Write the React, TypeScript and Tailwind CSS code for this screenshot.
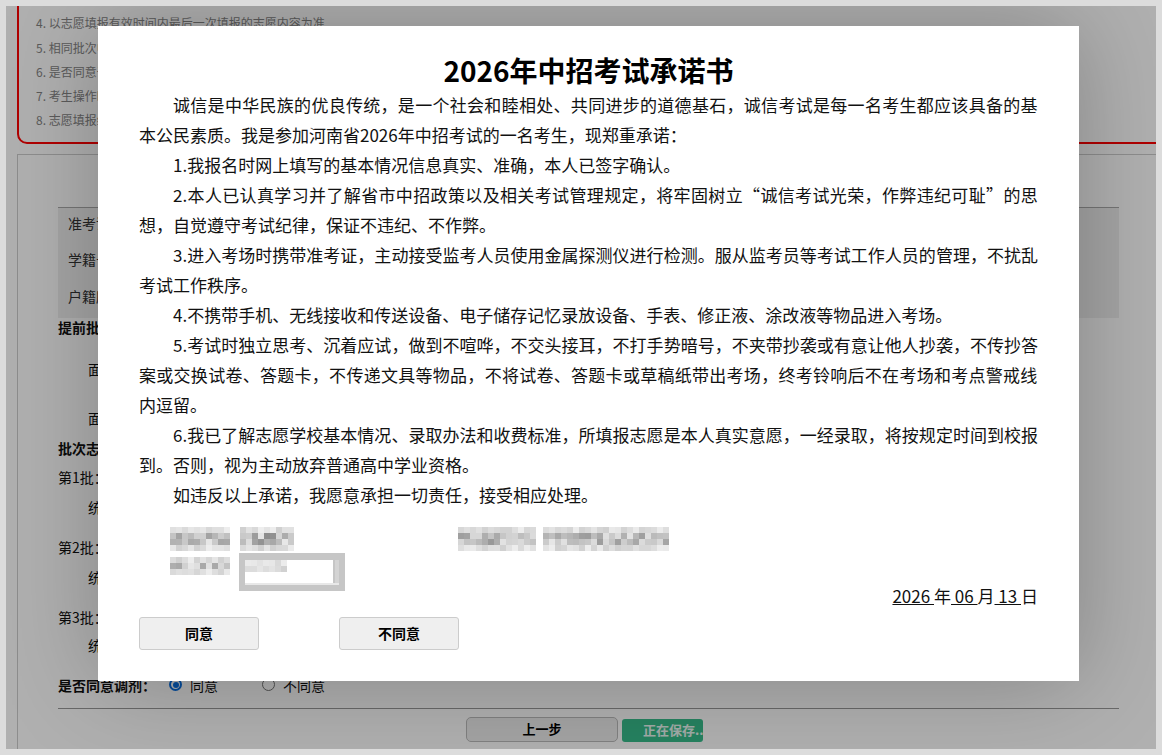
import React from "react";

type Line = { text: string; indent?: boolean; justify?: boolean };

const LINES: Line[] = [
  { text: "诚信是中华民族的优良传统，是一个社会和睦相处、共同进步的道德基石，诚信考试是每一名考生都应该具备的基", indent: true, justify: true },
  { text: "本公民素质。我是参加河南省2026年中招考试的一名考生，现郑重承诺：" },
  { text: "1.我报名时网上填写的基本情况信息真实、准确，本人已签字确认。", indent: true },
  { text: "2.本人已认真学习并了解省市中招政策以及相关考试管理规定，将牢固树立“诚信考试光荣，作弊违纪可耻”的思", indent: true, justify: true },
  { text: "想，自觉遵守考试纪律，保证不违纪、不作弊。" },
  { text: "3.进入考场时携带准考证，主动接受监考人员使用金属探测仪进行检测。服从监考员等考试工作人员的管理，不扰乱", indent: true, justify: true },
  { text: "考试工作秩序。" },
  { text: "4.不携带手机、无线接收和传送设备、电子储存记忆录放设备、手表、修正液、涂改液等物品进入考场。", indent: true },
  { text: "5.考试时独立思考、沉着应试，做到不喧哗，不交头接耳，不打手势暗号，不夹带抄袭或有意让他人抄袭，不传抄答", indent: true, justify: true },
  { text: "案或交换试卷、答题卡，不传递文具等物品，不将试卷、答题卡或草稿纸带出考场，终考铃响后不在考场和考点警戒线", justify: true },
  { text: "内逗留。" },
  { text: "6.我已了解志愿学校基本情况、录取办法和收费标准，所填报志愿是本人真实意愿，一经录取，将按规定时间到校报", indent: true, justify: true },
  { text: "到。否则，视为主动放弃普通高中学业资格。" },
  { text: "如违反以上承诺，我愿意承担一切责任，接受相应处理。", indent: true },
];

function tokens(s: string): string[] {
  return s.match(/[A-Za-z0-9.]+|./gu) || [];
}

function TextLine({ line }: { line: Line }) {
  if (line.justify) {
    return (
      <div className={line.indent ? "flex justify-between pl-[34px]" : "flex justify-between"}>
        {tokens(line.text).map((t, i) => (
          <span key={i}>{t}</span>
        ))}
      </div>
    );
  }
  return <div className={line.indent ? "pl-[34px]" : ""}>{line.text}</div>;
}

function rnd(x: number, y: number, seed: number) {
  const v = Math.sin(x * 12.9898 + y * 78.233 + seed * 3.7) * 43758.5453;
  return v - Math.floor(v);
}

function mosaic(x0: number, y0: number, w: number, h: number, seed: number, depth: number) {
  const out: React.ReactElement[] = [];
  const rows = Math.ceil(h / 6);
  for (let j = 0; j < rows; j++) {
    const y = y0 + j * 6;
    for (let x = x0; x < x0 + w; x += 6) {
      const r = rnd(x, y, seed);
      const edge = j === 0 || j === rows - 1;
      const g = Math.round(edge ? 238 - r * 30 : 232 - r * depth);
      out.push(
        <rect key={`${seed}-${x}-${y}`} x={x} y={y} width={6} height={6} fill={`rgb(${g},${g},${g})`} />
      );
    }
  }
  return out;
}

function Signature() {
  return (
    <svg width="540" height="64" viewBox="0 0 540 64">
      {mosaic(31, 0, 60, 20, 1, 70)}
      {mosaic(101, 0, 54, 20, 2, 95)}
      {mosaic(319, 0, 78, 20, 3, 80)}
      {mosaic(404, 0, 126, 20, 4, 75)}
      {mosaic(31, 30, 60, 18, 5, 90)}
      <rect x="100" y="26" width="106" height="38" fill="#c6c6c6" />
      <rect x="106" y="33" width="88" height="23" fill="#ffffff" />
      <rect x="196" y="33" width="4" height="23" fill="#d4d4d4" />
      {mosaic(106, 33, 42, 12, 6, 60)}
      <rect x="106" y="56" width="94" height="2" fill="#e8e8e8" />
    </svg>
  );
}

function Radio({ checked }: { checked?: boolean }) {
  return checked ? (
    <span className="inline-flex h-[13px] w-[13px] shrink-0 items-center justify-center rounded-full border-[2px] border-[#0a6fe0] bg-white">
      <span className="h-[6px] w-[6px] rounded-full bg-[#0a6fe0]" />
    </span>
  ) : (
    <span className="inline-block h-[13px] w-[13px] shrink-0 rounded-full border border-[#767676] bg-white" />
  );
}

export default function App() {
  const font = { fontFamily: '"Noto Sans CJK SC", "Noto Sans", sans-serif' };
  return (
    <div className="h-[755px] w-[1162px] bg-[#dcdcdc] p-[6px]" style={font}>
      <div className="relative h-full w-full overflow-hidden bg-white text-[14px] text-[#333]">
        {/* page underneath */}
        <div className="pl-[11px]">
          <div className="-mr-[12px] -mt-[30px] rounded-[10px] border-2 border-[#ff0000] pb-[9px] pl-[17px] pt-[9px] text-[12px] leading-[24.25px] text-[#858585]">
            <div>3. 志愿填报时间截止后，系统将自动保存最后一次提交的志愿信息。</div>
            <div>4. 以志愿填报有效时间内最后一次填报的志愿内容为准</div>
            <div>5. 相同批次中不能重复填报同一所学校。</div>
            <div>6. 是否同意调剂由考生本人决定。</div>
            <div>7. 考生操作时请注意保护个人信息。</div>
            <div>8. 志愿填报结束后请及时退出系统。</div>
          </div>
          <div className="-mr-[12px] mt-[10.5px] h-[700px] border-l border-t border-[#cccccc] pl-[40px] pt-[52px]">
            <div className="w-[1061px]">
              <div className="border-t border-[#aaaaaa] bg-[#efefef] text-[#333]">
                <div className="flex h-[36.5px] items-center pb-[6px] pl-[10px]">准考证号：</div>
                <div className="flex h-[36.5px] items-center pb-[6px] pl-[10px]">学籍号：</div>
                <div className="flex h-[36.5px] items-center pb-[6px] pl-[10px]">户籍所在地：</div>
              </div>
              <div className="leading-[18px] text-[#111]">
                <div className="h-[42px] font-bold">提前批志愿</div>
                <div className="h-[49px] pl-[30px]">面向全省招生学校：</div>
                <div className="h-[30px] pl-[30px]">面向本市招生学校：</div>
                <div className="h-[29px] font-bold">批次志愿</div>
                <div className="h-[30px]">第1批：</div>
                <div className="h-[40px] pl-[30px]">统招志愿：</div>
                <div className="h-[30px]">第2批：</div>
                <div className="h-[40px] pl-[30px]">统招志愿：</div>
                <div className="h-[28px]">第3批：</div>
                <div className="h-[40px] pl-[30px]">统招志愿：</div>
                <div className="flex h-[18px] items-center">
                  <span className="w-[111px] font-bold">是否同意调剂：</span>
                  <Radio checked />
                  <span className="ml-[8px] w-[72px]">同意</span>
                  <Radio />
                  <span className="ml-[8px]">不同意</span>
                </div>
              </div>
              <div className="mt-[14px] border-t border-[#999999]" />
              <div className="mt-[8px] flex items-end justify-center gap-[4px] pr-[8px]">
                <div className="flex h-[25px] w-[152px] items-center justify-center rounded-[5px] border border-[#bbbbbb] bg-[#eeeeee] text-[13px] font-bold text-black">
                  上一步
                </div>
                <div className="flex h-[23px] w-[81px] items-center overflow-hidden whitespace-nowrap rounded-[3px] bg-[#37bd8c] pl-[21px] text-[13px] font-bold text-white/90">
                  正在保存...
                </div>
              </div>
            </div>
          </div>
        </div>

        {/* overlay */}
        <div className="absolute inset-0 bg-black/[0.31]" />

        {/* modal */}
        <div className="absolute left-[92px] top-[20px] h-[655px] w-[981px] bg-white px-[41px] pt-[24px] text-black shadow-[0_0_90px_rgba(0,0,0,0.25)]">
          <div className="text-center text-[28px] font-bold leading-[40px]">2026年中招考试承诺书</div>
          <div className="text-[17px] leading-[30px] text-[#111]">
            {LINES.map((l, i) => (
              <TextLine key={i} line={l} />
            ))}
          </div>
          <div className="flex h-[101px] justify-between">
            <div className="pt-[17px]">
              <Signature />
            </div>
            <div className="self-end text-[17px] leading-[30px] text-[#111]">
              <span className="underline">2026 </span>年<span className="underline"> 06 </span>月
              <span className="underline"> 13 </span>日
            </div>
          </div>
          <div className="mt-[6px] flex gap-[80px]">
            <div className="flex h-[33px] w-[120px] items-center justify-center rounded-[3px] border border-[#cccccc] bg-[#efefef] text-[14px] font-bold">
              同意
            </div>
            <div className="flex h-[33px] w-[120px] items-center justify-center rounded-[3px] border border-[#cccccc] bg-[#efefef] text-[14px] font-bold">
              不同意
            </div>
          </div>
        </div>
      </div>
    </div>
  );
}
